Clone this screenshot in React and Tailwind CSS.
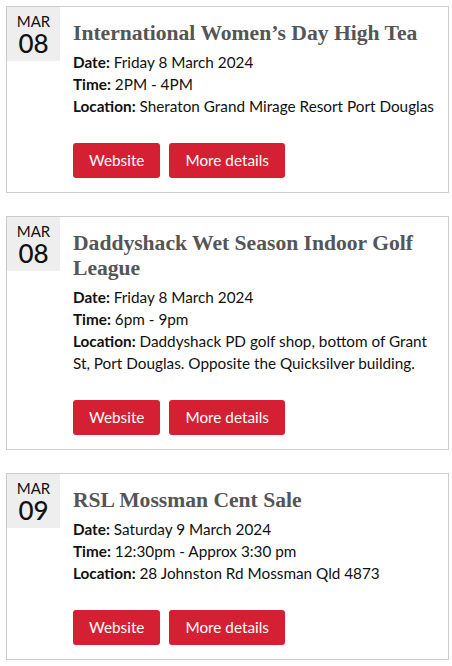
import React from "react";

const events = [
  {
    mon: "MAR",
    day: "08",
    title: "International Women\u2019s Day High Tea",
    date: "Friday 8 March 2024",
    time: "2PM - 4PM",
    location: "Sheraton Grand Mirage Resort Port Douglas",
  },
  {
    mon: "MAR",
    day: "08",
    title: "Daddyshack Wet Season Indoor Golf League",
    date: "Friday 8 March 2024",
    time: "6pm - 9pm",
    location:
      "Daddyshack PD golf shop, bottom of Grant St, Port Douglas. Opposite the Quicksilver building.",
  },
  {
    mon: "MAR",
    day: "09",
    title: "RSL Mossman Cent Sale",
    date: "Saturday 9 March 2024",
    time: "12:30pm - Approx 3:30 pm",
    location: "28 Johnston Rd Mossman Qld 4873",
  },
];

function Card({ e }) {
  return (
    <div className="flex border border-[#cccccc] bg-white">
      <div className="w-[53px] shrink-0">
        <div className="flex h-[54px] flex-col items-center bg-[#eeeeee] pt-[5px] text-[#111]">
          <span className="text-[15px] leading-[18px]">{e.mon}</span>
          <span className="text-[26px] font-medium leading-[26px]">{e.day}</span>
        </div>
      </div>
      <div className="flex-1 pl-[13px] pr-[8px] pt-[14px] pb-[14px]">
        <h2 className="font-['Liberation_Serif',serif] text-[21.6px] font-bold leading-[25px] text-[#555555]">
          {e.title}
        </h2>
        <div className="mt-[4.5px] text-[15.3px] leading-[22px] text-[#111]">
          <p>
            <b className="font-bold">Date:</b> {e.date}
          </p>
          <p>
            <b className="font-bold">Time:</b> {e.time}
          </p>
          <p>
            <b className="font-bold">Location:</b> {e.location}
          </p>
        </div>
        <div className="mt-[26.5px] flex gap-[9px]">
          <a className="rounded-[3px] bg-[#d51f32] px-[16px] py-[6px] text-[15.3px] leading-[23px] text-white">
            Website
          </a>
          <a className="rounded-[3px] bg-[#d51f32] px-[16px] py-[6px] text-[15.3px] leading-[23px] text-white">
            More details
          </a>
        </div>
      </div>
    </div>
  );
}

export default function App() {
  return (
    <div className="min-h-[666px] bg-white pl-[6px] pr-[3px] pt-[6px] font-['Lato','Noto_Sans',sans-serif]">
      <div className="flex flex-col gap-[23px]">
        {events.map((e, i) => (
          <Card key={i} e={e} />
        ))}
      </div>
    </div>
  );
}
